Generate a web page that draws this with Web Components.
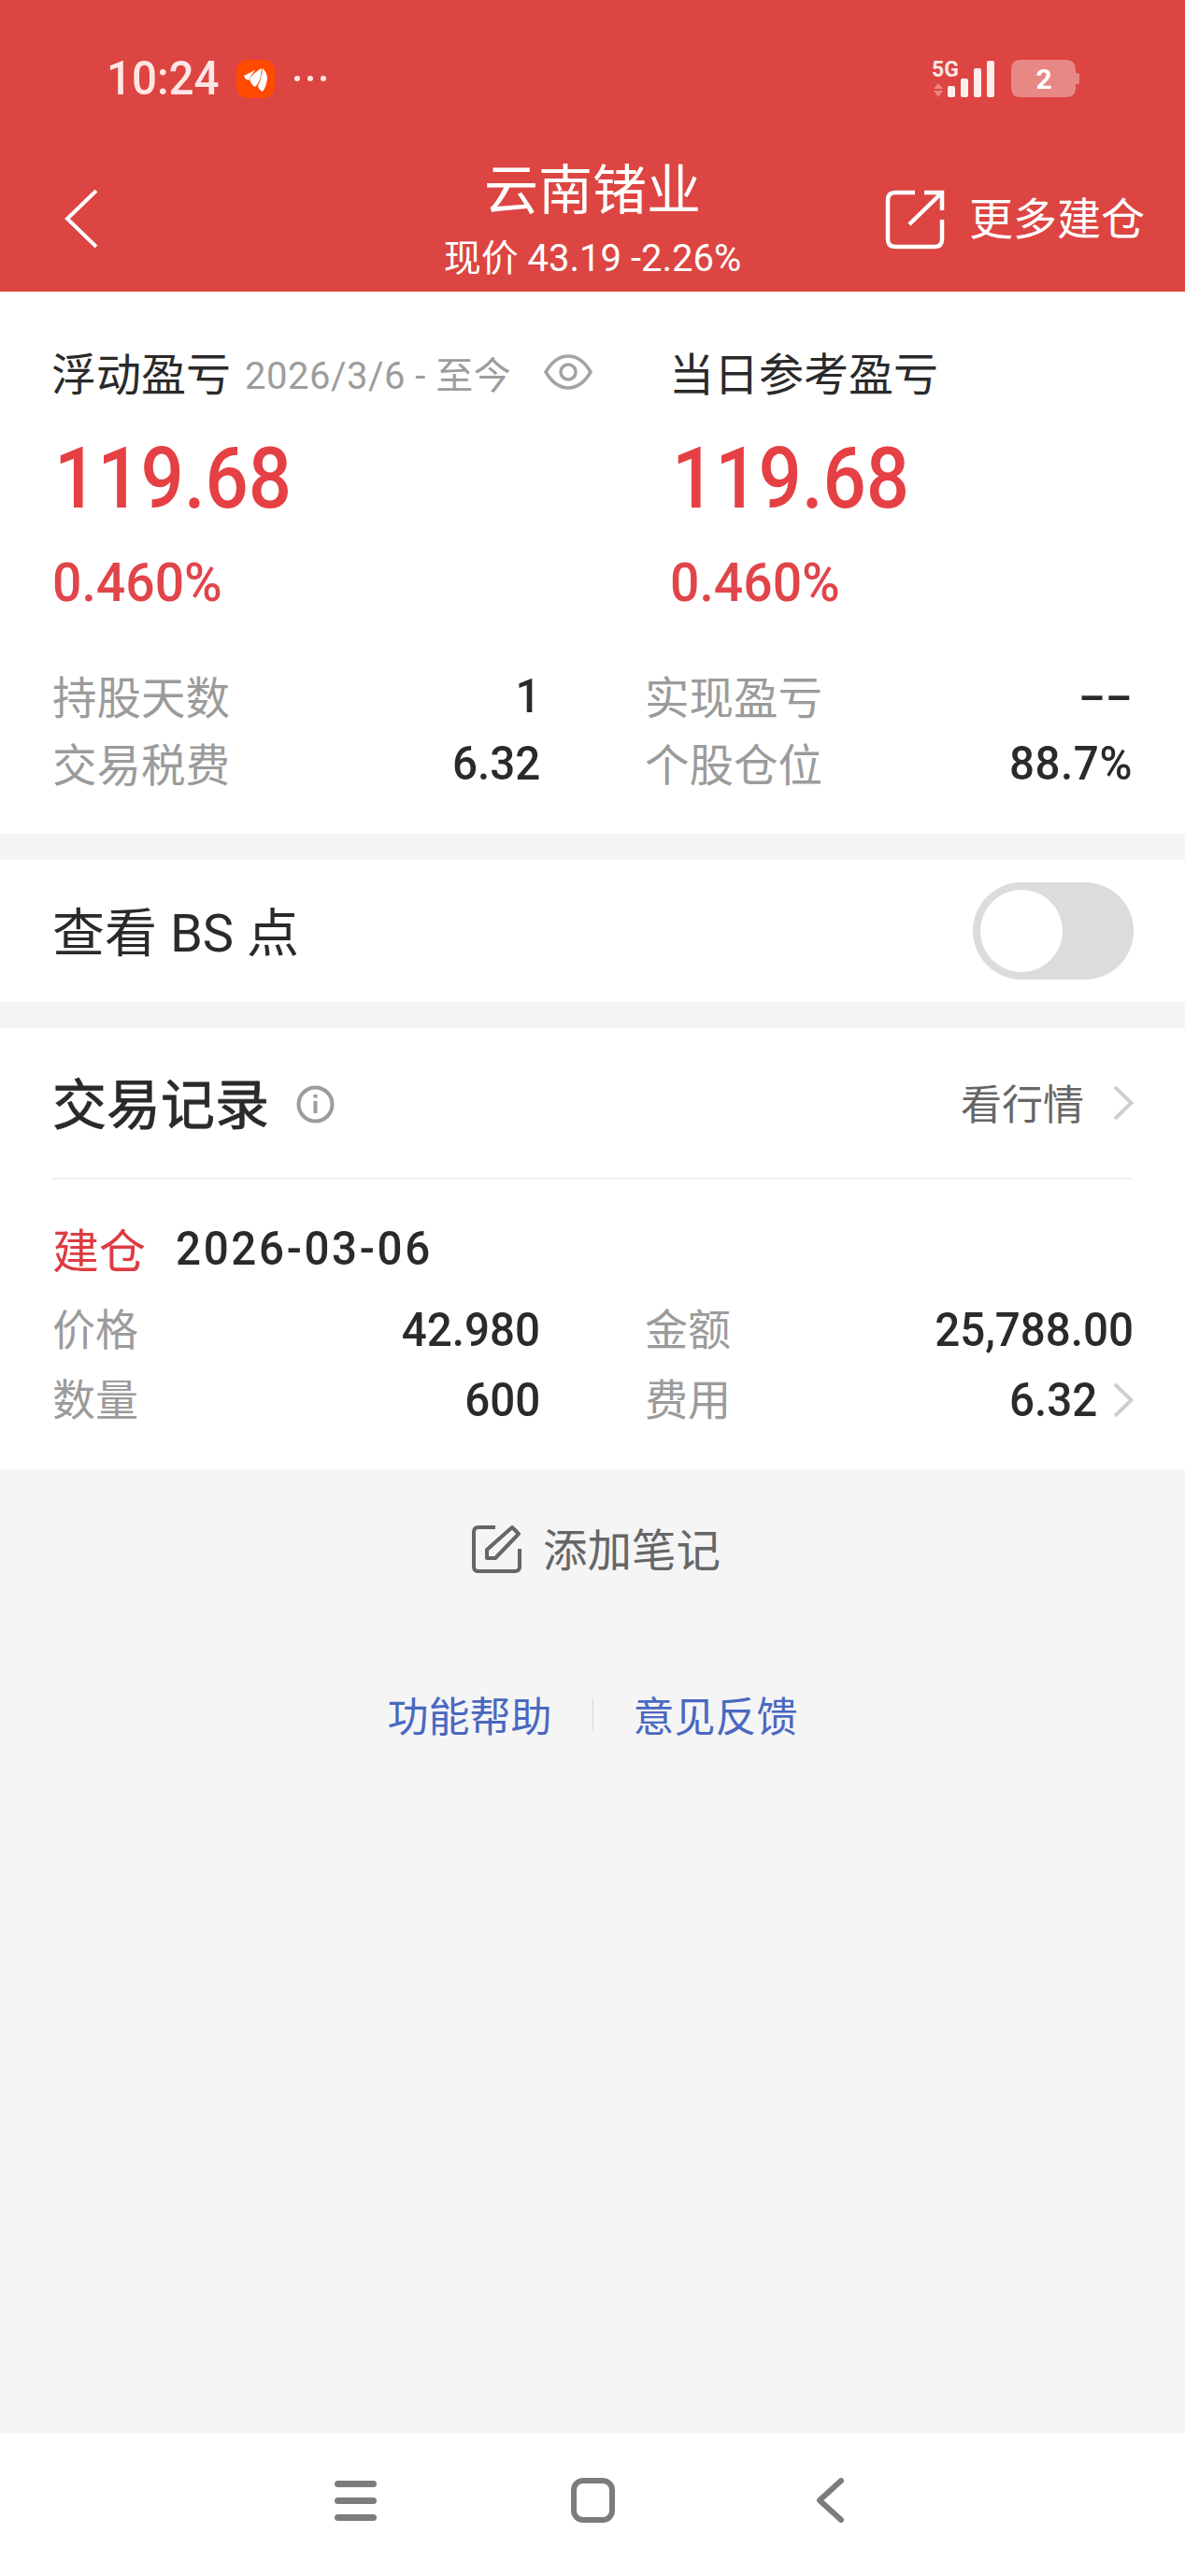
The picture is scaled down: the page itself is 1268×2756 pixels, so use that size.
<!DOCTYPE html>
<html lang="zh-CN">
<head>
<meta charset="utf-8">
<title>云南锗业</title>
<style>
  html, body { margin: 0; height: 100%; }
  body {
    display: flex;
    flex-direction: column;
    height: 2756px;
    background: #f5f5f6;
    font-family: Roboto, "Noto Sans CJK SC", sans-serif;
    color: #2a2a2a;
  }
  page-foot { flex: 1; }
</style>
</head>
<body>
<top-header></top-header>
<pnl-card></pnl-card>
<bs-toggle></bs-toggle>
<trade-card></trade-card>
<page-foot></page-foot>
<nav-bar></nav-bar>

<script>
// digits in the reference are narrower than Roboto, so squeeze them a bit
const numStyle = `
  .num { display: inline-block; white-space: nowrap; font-weight: 500; transform: scaleX(.95); transform-origin: right center; }
  .num.left { transform-origin: left center; }
`;

const CHEVRON = `<svg width="22" height="38" viewBox="0 0 22 38" fill="none" stroke="#cfcfcf" stroke-width="4"><path d="M2 2 L19.500 19 L2 36"/></svg>`;

class TopHeader extends HTMLElement {
  constructor() {
    super();
    this.attachShadow({ mode: "open" });
    this.shadowRoot.innerHTML = `
    <style>
      ${numStyle}
      :host { display: block; height: 312px; background: #dc4541; color: #fff; }
      .status { height: 168px; display: flex; align-items: center; padding: 0 112px 0 114px; box-sizing: border-box; }
      .time { font-size: 50px; color: #fde6e5; line-height: 60px; transform: scaleX(.95); }
      .logo { width: 41px; height: 41px; margin-left: 12px; border-radius: 12px; background: #ff4a00; }
      .dots { display: flex; gap: 8px; margin-left: 21px; }
      .dots i { width: 6px; height: 6px; border-radius: 50%; background: #fde6e5; }
      .right { margin-left: auto; }
      .bar { display: grid; grid-template-columns: 1fr auto 1fr; height: 144px; }
      .back { margin: 35px 0 0 68px; }
      .mid { text-align: center; }
      .title { font-size: 58px; line-height: 72px; }
      .sub { font-size: 40px; line-height: 60px; margin-top: 7px; }
      .more { display: flex; justify-content: flex-end; align-items: center; gap: 26px; padding: 0 43px 0 0; height: 128px; margin-top: 3px; }
      .more span { font-size: 47px; margin-bottom: 10px; }
    </style>
    <div class="status">
      <span class="time num left">10:24</span>
      <svg class="logo" viewBox="0 0 41 41" fill="#fff">
        <path d="M8 17 L20 11 Q16 16 13 22 Q9 21 8 17Z"/>
        <path d="M14 21 Q18 14 27 9 L26 18 Q24 25 20 29 Q16 27 14 21Z"/>
        <path d="M28 9 Q33 14 33 20 Q32 29 28 34 Q24 32 23 28 Q27 20 28 9Z"/>
      </svg>
      <div class="dots"><i></i><i></i><i></i></div>
      <svg class="right" width="159" height="44" viewBox="0 0 159 44">
        <text x="0" y="20" font-family="Roboto" font-weight="700" font-size="23" fill="#fde6e5">5G</text>
        <path d="M7 27 L12 33 H2Z M7 42 L12 35 H2Z" fill="#ee8583"/>
        <g fill="#fdeeee">
          <rect x="17" y="30" width="8" height="12" rx="2"/>
          <rect x="31" y="22" width="8" height="20" rx="2"/>
          <rect x="45" y="11" width="8" height="31" rx="2"/>
          <rect x="59" y="3" width="8" height="39" rx="2"/>
        </g>
        <path d="M95 2 H143 Q154 2 154 13 V32 Q154 42 143 42 H95 Q85 42 85 32 V13 Q85 2 95 2Z M154 16 h2 q2 0 2 2 v8 q0 2 -2 2 h-2Z" fill="#fff" fill-opacity=".36"/>
        <text x="120" y="33" text-anchor="middle" font-family="Roboto" font-weight="700" font-size="30" fill="#fff">2</text>
      </svg>
    </div>
    <div class="bar">
      <svg class="back" width="38" height="62" viewBox="0 0 38 62" fill="none" stroke="#fff" stroke-width="4"><path d="M35 1 L4 31 L35 61"/></svg>
      <div class="mid">
        <div class="title">云南锗业</div>
        <div class="sub">现价 43.19 -2.26%</div>
      </div>
      <div class="more">
        <svg width="64" height="64" viewBox="0 0 64 64" fill="none" stroke="#fff" stroke-width="4.500"><path d="M32 3 H11 Q3 3 3 11 V53 Q3 61 11 61 H53 Q61 61 61 53 V32"/><path d="M26 37 L61 3 M42 3 H61 V22"/></svg>
        <span>更多建仓</span>
      </div>
    </div>`;
  }
}

class PnlCell extends HTMLElement {
  constructor() {
    super();
    this.attachShadow({ mode: "open" });
    this.shadowRoot.innerHTML = `
    <style>
      ${numStyle}
      :host { display: block; }
      .top { display: flex; align-items: center; height: 60px; font-size: 48px; }
      .top > span { margin: 0 0 5px -1px; }
      .top ::slotted(*) { margin-left: 15px; }
      .big { display: block; color: #e54044; font-size: 90px; line-height: 100px; margin: 34px 0 0 2px; transform: scaleX(.905); }
      .pct { display: block; color: #e0454a; font-size: 57px; line-height: 70px; margin-top: 26px; transform: scaleX(.97); }
    </style>
    <div class="top"><span>${this.getAttribute("label")}</span><slot></slot></div>
    <span class="big num left">119.68</span>
    <span class="pct num left">0.460%</span>`;
  }
}

class PnlCard extends HTMLElement {
  constructor() {
    super();
    this.attachShadow({ mode: "open" });
    this.shadowRoot.innerHTML = `
    <style>
      ${numStyle}
      :host { display: block; background: #fff; height: 580px; box-sizing: border-box; padding: 57px 56px 0; }
      .cols { display: grid; grid-template-columns: 661px 1fr; }
      .date { display: flex; align-items: center; color: #9c9c9c; font-size: 40px; letter-spacing: .5px; }
      .date svg { margin-left: 35px; margin-bottom: 3px; }
      .stats { display: grid; grid-template-columns: 522px 522px; column-gap: 112px; margin-top: 50px; }
      .row { display: flex; justify-content: space-between; align-items: center; height: 72px; }
      .lab { color: #9b9b9b; font-size: 47.500px; margin-bottom: 4px; }
      .num { font-size: 50px; }
      .pos { letter-spacing: .6px; }
      .dash { transform: scaleX(1.700); }
    </style>
    <div class="cols">
      <pnl-cell label="浮动盈亏">
        <div class="date"><span>2026/3/6 - 至今</span>
          <svg width="52" height="38" viewBox="0 0 52 38" fill="none" stroke="#a3a3a3" stroke-width="3.500"><path d="M2 19 C9 7 17 2 26 2 C35 2 43 7 50 19 C43 31 35 36 26 36 C17 36 9 31 2 19Z"/><circle cx="26" cy="19" r="8"/></svg>
        </div>
      </pnl-cell>
      <pnl-cell label="当日参考盈亏"></pnl-cell>
    </div>
    <div class="stats">
      <div class="row"><span class="lab">持股天数</span><span class="num">1</span></div>
      <div class="row"><span class="lab">实现盈亏</span><span class="num dash">--</span></div>
      <div class="row"><span class="lab">交易税费</span><span class="num">6.32</span></div>
      <div class="row"><span class="lab">个股仓位</span><span class="num pos">88.7%</span></div>
    </div>`;
  }
}

class BsToggle extends HTMLElement {
  constructor() {
    super();
    this.attachShadow({ mode: "open" });
    this.shadowRoot.innerHTML = `
    <style>
      :host { display: flex; align-items: center; justify-content: space-between; background: #fff; height: 152px; margin-top: 28px; padding: 0 55px 0 56px; font-size: 56px; }
      span { margin-bottom: 5px; }
      .sw { width: 172px; height: 104px; border-radius: 52px; background: #dcdcdc; padding: 8px; box-sizing: border-box; }
      .sw i { display: block; width: 88px; height: 88px; border-radius: 50%; background: #fff; }
    </style>
    <span>查看 BS 点</span>
    <div class="sw"><i></i></div>`;
  }
}

class TradeCard extends HTMLElement {
  constructor() {
    super();
    this.attachShadow({ mode: "open" });
    this.shadowRoot.innerHTML = `
    <style>
      ${numStyle}
      :host { display: block; background: #fff; height: 472px; margin-top: 28px; padding: 0 55px 0 56px; }
      .head { display: flex; align-items: center; height: 162px; box-sizing: border-box; border-bottom: 2px solid #f1f1f1; }
      .head h2 { margin: 0 0 5px; font-size: 58px; font-weight: 400; -webkit-text-stroke: .8px #2a2a2a; }
      .head svg.info { margin: 2px 0 0 29px; }
      .go { margin-left: auto; display: flex; align-items: center; gap: 31px; color: #666; font-size: 44px; }
      .go span { margin-bottom: 2px; }
      .when { display: flex; align-items: center; height: 60px; margin-top: 44px; }
      .when b { color: #dc3c42; font-size: 50px; font-weight: 400; margin-bottom: 3px; }
      .when .num { font-size: 50px; margin-left: 32px; letter-spacing: 2.800px; }
      .grid { display: grid; grid-template-columns: 522px 1fr; column-gap: 112px; margin-top: 19px; }
      .row { display: flex; justify-content: space-between; align-items: center; height: 75px; }
      .lab { color: #9b9b9b; font-size: 46px; margin-bottom: 7px; }
      .row .num { font-size: 50px; }
      .fee { display: flex; align-items: center; gap: 17px; }
    </style>
    <div class="head">
      <h2>交易记录</h2>
      <svg class="info" width="41" height="41" viewBox="0 0 41 41" fill="none" stroke="#9c9c9c" stroke-width="4">
        <circle cx="20.500" cy="20.500" r="18"/><path d="M20.500 17 V30"/><path d="M20.500 10 V13.500"/>
      </svg>
      <div class="go"><span>看行情</span>${CHEVRON}</div>
    </div>
    <div class="when"><b>建仓</b><span class="num left">2026-03-06</span></div>
    <div class="grid">
      <div class="row"><span class="lab">价格</span><span class="num">42.980</span></div>
      <div class="row"><span class="lab">金额</span><span class="num">25,788.00</span></div>
      <div class="row"><span class="lab">数量</span><span class="num">600</span></div>
      <div class="row"><span class="lab">费用</span><div class="fee"><span class="num">6.32</span>${CHEVRON}</div></div>
    </div>`;
  }
}

class PageFoot extends HTMLElement {
  constructor() {
    super();
    this.attachShadow({ mode: "open" });
    this.shadowRoot.innerHTML = `
    <style>
      :host { display: block; padding-top: 55px; }
      .note { display: flex; justify-content: center; align-items: center; gap: 23px; height: 60px; padding-left: 7px; color: #666; font-size: 47.500px; }
      .note span { margin-bottom: 4px; }
      .note svg { margin-top: 1px; }
      .links { display: flex; justify-content: center; align-items: center; height: 60px; margin-top: 118px; color: #4a68c0; font-size: 44px; }
      .links span { margin-bottom: 3px; }
      .links i { width: 1px; height: 34px; background: #d5d5d5; margin: 0 43px; }
    </style>
    <div class="note">
      <svg width="54" height="53" viewBox="0 0 54 53" fill="none" stroke="#666" stroke-width="4">
        <path d="M26 3 H8 Q3 3 3 8 V45 Q3 50 8 50 H47 Q52 50 52 45 V26"/>
        <path d="M17 36 V27 L44 3 L51 10 L26 36Z" stroke-linejoin="round"/>
      </svg>
      <span>添加笔记</span>
    </div>
    <div class="links"><span>功能帮助</span><i></i><span>意见反馈</span></div>`;
  }
}

class NavBar extends HTMLElement {
  constructor() {
    super();
    this.attachShadow({ mode: "open" });
    this.shadowRoot.innerHTML = `
    <style>
      :host { display: grid; grid-template-columns: repeat(3, 254px); justify-content: center; justify-items: center; align-items: center; background: #fff; height: 153px; box-sizing: border-box; padding-bottom: 9px; }
    </style>
    <svg width="45" height="43" viewBox="0 0 45 43" fill="#7c7c7c">
      <rect y="0" width="45" height="7" rx="3.500"/><rect y="18" width="45" height="7" rx="3.500"/><rect y="36" width="45" height="7" rx="3.500"/>
    </svg>
    <svg width="47" height="48" viewBox="0 0 47 48" fill="none" stroke="#7c7c7c" stroke-width="6"><rect x="3" y="3" width="41" height="42" rx="10"/></svg>
    <svg width="30" height="48" viewBox="0 0 30 48" fill="none" stroke="#7c7c7c" stroke-width="6" stroke-linecap="round" stroke-linejoin="round"><path d="M27 3 L4 24 L27 45"/></svg>`;
  }
}

customElements.define("top-header", TopHeader);
customElements.define("pnl-cell", PnlCell);
customElements.define("pnl-card", PnlCard);
customElements.define("bs-toggle", BsToggle);
customElements.define("trade-card", TradeCard);
customElements.define("page-foot", PageFoot);
customElements.define("nav-bar", NavBar);
</script>
</body>
</html>
